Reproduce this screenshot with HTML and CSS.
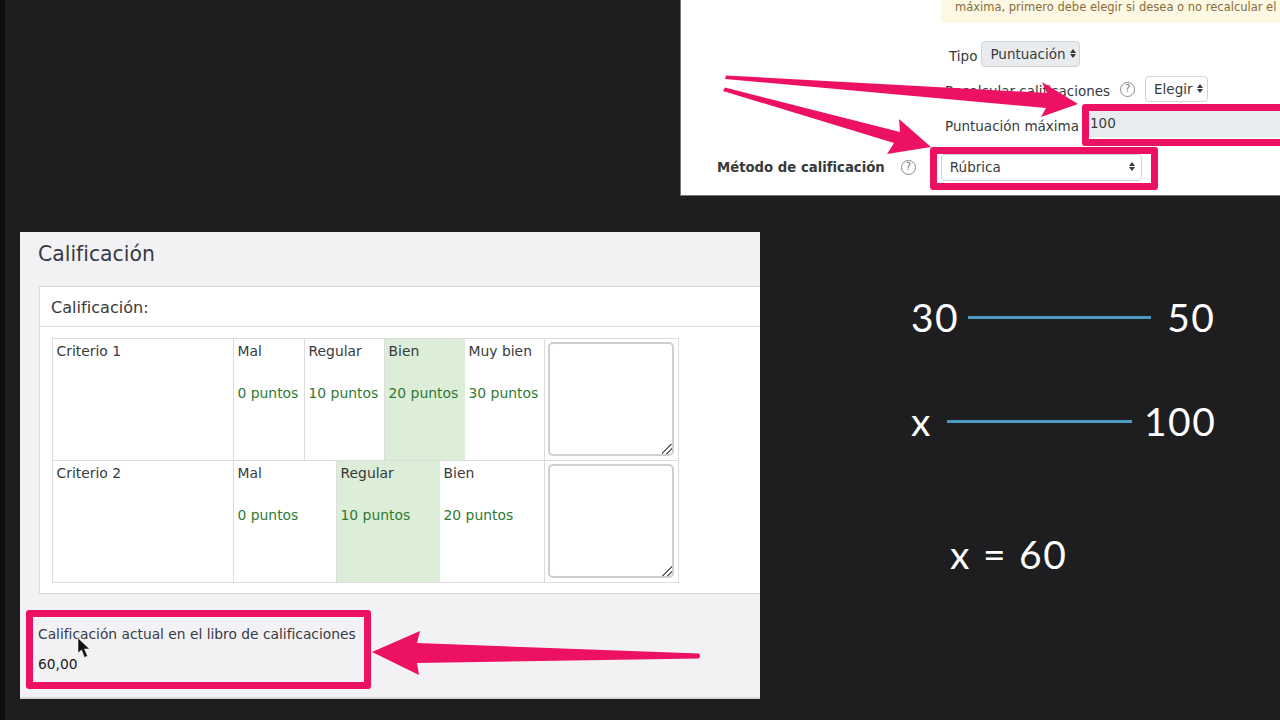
FILE: index.html
```html
<!DOCTYPE html>
<html lang="es">
<head>
    <meta charset="UTF-8">
    <title>Calificación</title>
    <link rel="stylesheet" href="styles.css">
</head>
<body>
    <div class="edge-strip"></div>

    <div class="settings-window">
        <div class="alert">máxima, primero debe elegir si desea o no recalcular el</div>
        <div class="form-row row-tipo">
            <span class="row-label">Tipo</span>
            <span class="select select-off">Puntuación <i class="updown"></i></span>
        </div>
        <div class="form-row row-recalc">
            <span class="row-label">Recalcular calificaciones</span>
            <span class="help">?</span>
            <span class="select">Elegir <i class="updown"></i></span>
        </div>
        <div class="form-row row-puntos">
            <span class="row-label">Puntuación máxima</span>
            <span class="input-off">100</span>
        </div>
        <div class="form-row row-metodo">
            <span class="row-label strong">Método de calificación</span>
            <span class="help">?</span>
            <span class="select select-wide">Rúbrica <i class="updown"></i></span>
        </div>
    </div>

    <div class="grade-window">
        <h3 class="grade-title">Calificación</h3>
        <div class="card">
            <div class="card-head">Calificación:</div>
            <div class="card-body">
                <div class="rubric">
                    <div class="rubric-row">
                        <div class="cell cell-name">Criterio 1</div>
                        <div class="cell w71"><p>Mal</p><p class="pts">0 puntos</p></div>
                        <div class="cell w80"><p>Regular</p><p class="pts">10 puntos</p></div>
                        <div class="cell w80 picked"><p>Bien</p><p class="pts">20 puntos</p></div>
                        <div class="cell w80"><p>Muy bien</p><p class="pts">30 puntos</p></div>
                        <div class="cell cell-note"><div class="note"><i class="grip"></i></div></div>
                    </div>
                    <div class="rubric-row">
                        <div class="cell cell-name">Criterio 2</div>
                        <div class="cell w103"><p>Mal</p><p class="pts">0 puntos</p></div>
                        <div class="cell w103 picked"><p>Regular</p><p class="pts">10 puntos</p></div>
                        <div class="cell w105"><p>Bien</p><p class="pts">20 puntos</p></div>
                        <div class="cell cell-note"><div class="note"><i class="grip"></i></div></div>
                    </div>
                </div>
            </div>
        </div>
        <div class="current">
            <p>Calificación actual en el libro de calificaciones</p>
            <p class="current-value">60,00</p>
        </div>
    </div>

    <div class="math">
        <div class="math-row row-one"><span>30</span><i class="rule"></i><span>50</span></div>
        <div class="math-row row-two"><span>x</span><i class="rule"></i><span>100</span></div>
        <div class="math-result">x = 60</div>
    </div>

    <!-- marks drawn on top of the screenshots -->
    <div class="mark mark-puntos"></div>
    <div class="mark mark-metodo"></div>
    <div class="mark mark-current"></div>

    <svg class="arrows" width="1280" height="720" viewBox="0 0 1280 720">
        <path d="M726 75.500L1047 93L1042 82L1078 104L1041 117L1046 108L725 79Z"/>
        <path d="M725 87.500L900 132L899 119L931 147L887 154L894 143L723 91Z"/>
        <path d="M372 652L420 631L417 643L699 653.500Q701 656 699 658.500L417 663L419 675Z"/>
        <path class="pointer-edge" d="M78 638V653L81.500 650L84.500 657.500L87.500 656L84.500 649L89.500 649Z"/>
    </svg>
</body>
</html>
```

FILE: styles.css
```css
body {
    margin: 0;
    width: 1280px;
    height: 720px;
    overflow: hidden;
    position: relative;
    background-color: #1e1d20;
    font-family: "DejaVu Sans", sans-serif;
    color: #373a3c;
}
p {
    margin: 0;
}
.edge-strip {
    position: absolute;
    left: 0;
    top: 0;
    width: 5px;
    height: 720px;
    background-color: #0e0e10;
}

/* top right window */
.settings-window {
    position: absolute;
    left: 680px;
    top: 0;
    width: 600px;
    height: 196px;
    box-sizing: border-box;
    background-color: #fff;
    border-left: 1px solid #777;
    border-bottom: 1px solid #777;
    overflow: hidden;
    font-size: 13.5px;
}
.alert {
    margin-left: 260px;
    width: 339px;
    height: 23px;
    box-sizing: border-box;
    padding: 0 0 0 14px;
    line-height: 14px;
    font-size: 11.5px;
    white-space: nowrap;
    background-color: #fcf8e3;
    color: #8a6d3b;
    border-radius: 0 0 0 4px;
}
.form-row {
    display: flex;
    align-items: center;
}
.row-tipo {
    margin: 18px 0 0 268px;
    height: 26px;
    gap: 4px;
}
.row-recalc {
    margin: 9px 0 0 264px;
    height: 26px;
    gap: 10px;
}
.row-puntos {
    margin: 9px 0 0 264px;
    height: 26px;
    gap: 3px;
}
.row-metodo {
    margin: 17px 0 0 36px;
    height: 27px;
}
.row-tipo .row-label {
    padding-top: 4px;
}
.row-recalc .row-label {
    padding-top: 4px;
}
.row-puntos .row-label {
    padding-top: 4px;
}
.strong {
    font-weight: bold;
    font-size: 13.25px;
}
.row-metodo .help {
    margin: 0 25px 0 16px;
}
.help {
    width: 15px;
    height: 15px;
    box-sizing: border-box;
    border: 1.5px solid #8a8a8a;
    border-radius: 50%;
    font-size: 10px;
    line-height: 12px;
    text-align: center;
    color: #777;
}
.select {
    display: flex;
    align-items: center;
    justify-content: space-between;
    gap: 4px;
    height: 26px;
    box-sizing: border-box;
    padding: 0 4px 1px 8px;
    background-color: #fff;
    border: 1px solid #ced4da;
    border-radius: 4px;
    white-space: nowrap;
}
.select-off {
    width: 99px;
    background-color: #e9ecef;
}
.select-wide {
    width: 201px;
    height: 27px;
    padding: 0 6px 2px 8px;
}
.updown {
    display: flex;
    flex-direction: column;
    gap: 1px;
}
.updown::before,
.updown::after {
    content: "";
    width: 0;
    height: 0;
    border-left: 3px solid transparent;
    border-right: 3px solid transparent;
}
.updown::before {
    border-bottom: 4px solid #373a3c;
}
.updown::after {
    border-top: 4px solid #373a3c;
}
.input-off {
    flex: 1;
    height: 26px;
    line-height: 25px;
    padding-left: 8px;
    background-color: #e9ecef;
}

/* bottom left window */
.grade-window {
    position: absolute;
    left: 20px;
    top: 232px;
    width: 740px;
    height: 467px;
    box-sizing: border-box;
    background-color: #f2f2f5;
    border-bottom: 2px solid #d8d8da;
    overflow: hidden;
    font-size: 13.9px;
}
.grade-title {
    margin: 0;
    padding: 9px 0 0 18px;
    height: 51px;
    box-sizing: border-box;
    font-size: 20.4px;
    font-weight: normal;
    line-height: 26px;
    color: #373a45;
}
.card {
    margin: 3px 0 0 19px;
    height: 308px;
    box-sizing: border-box;
    background-color: #fff;
    border: 1px solid #dcdcdc;
    border-right: none;
}
.card-head {
    height: 40px;
    box-sizing: border-box;
    padding-left: 11px;
    line-height: 41px;
    font-size: 16.1px;
    border-bottom: 1px solid #dcdcdc;
}
.card-body {
    padding: 11px 0 0 12px;
}
.rubric {
    display: flex;
    flex-direction: column;
    width: 627px;
    border: 1px solid #dcdcdc;
    box-sizing: border-box;
}
.rubric-row {
    display: flex;
    height: 121px;
}
.rubric-row + .rubric-row {
    border-top: 1px solid #dcdcdc;
}
.cell {
    box-sizing: border-box;
    padding: 4px 0 0 3.5px;
    border-right: 1px solid #dcdcdc;
    white-space: nowrap;
    line-height: 17px;
}
.cell-name {
    width: 181px;
}
.w71 {
    width: 71px;
}
.w80 {
    width: 80px;
}
.w103 {
    width: 103px;
}
.w105 {
    width: 105px;
}
.pts {
    margin-top: 25px;
    color: #2f7a33;
}
.picked {
    background-color: #dcedd8;
    border-right-color: #dcedd8;
}
.cell-note {
    flex: 1;
    border-right: none;
    padding: 3px 3px 0 3px;
}
.note {
    position: relative;
    height: 114px;
    width: 126px;
    box-sizing: border-box;
    border: 2px solid #cfcfd3;
    border-radius: 5px;
    background-color: #fff;
}
.grip {
    position: absolute;
    right: 0;
    bottom: 0;
    width: 10px;
    height: 10px;
    background: linear-gradient(135deg, transparent 45%, #666 45%, #666 55%, transparent 55%, transparent 70%, #666 70%, #666 80%, transparent 80%);
}
.current {
    padding: 32px 0 0 18px;
    font-size: 13.8px;
    color: #373a45;
}
.current-value {
    margin-top: 14px;
    color: #1c1c1c;
}

/* rule of three */
.math {
    position: absolute;
    left: 911px;
    top: 293px;
    width: 310px;
    color: #fff;
    font-family: Lato, sans-serif;
    font-size: 39px;
    letter-spacing: 1.5px;
    line-height: 48px;
}
.math-row {
    display: flex;
    align-items: center;
}
.math-row + .math-row {
    margin-top: 56px;
}
.rule {
    display: block;
    width: 183px;
    height: 3px;
    background-color: #4a9bc2;
}
.row-one .rule {
    margin: 0 16px 0 9px;
}
.row-two .rule {
    width: 185px;
    margin: 0 12px 0 15px;
}
.math-result {
    margin: 85px 0 0 39px;
    word-spacing: 0.5px;
}

/* pink marks */
.mark {
    position: absolute;
    box-sizing: border-box;
    border: 7px solid #ec1163;
    border-radius: 3px;
}
.mark-puntos {
    left: 1082px;
    top: 104px;
    width: 210px;
    height: 42px;
}
.mark-metodo {
    left: 930px;
    top: 147px;
    width: 228px;
    height: 43px;
}
.mark-current {
    left: 26px;
    top: 610px;
    width: 345px;
    height: 79px;
}
.arrows {
    position: absolute;
    left: 0;
    top: 0;
    fill: #ec1163;
}
.pointer-edge {
    fill: #111;
    stroke: #fff;
    stroke-width: 0.5;
}
```
